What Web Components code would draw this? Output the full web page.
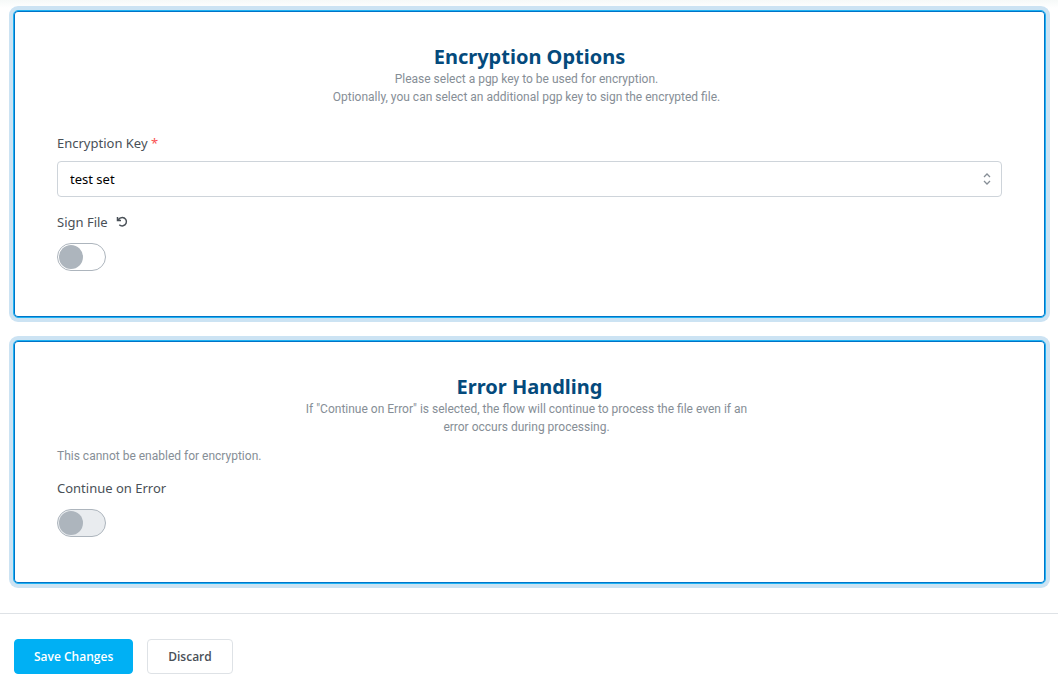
<!DOCTYPE html>
<html lang="en">
<head>
<meta charset="utf-8">
<meta name="viewport" content="width=device-width, initial-scale=1">
<title>Encryption Options</title>
<style>
    :root {
        --heading: #044a7c;
        --text: #495057;
        --muted: #868e96;
        --control-border: #ced4da;
        --primary: #00b0f4;
        --small-font: "Segoe UI", Roboto, sans-serif;
        --button-font: "Segoe UI", "Open Sans", sans-serif;
    }
    body {
        margin: 0;
        background: #fff linear-gradient(#f6f9f8, #fff) no-repeat top / 100% 8px;
        color: var(--text);
        font-family: "Segoe UI", "Noto Sans", sans-serif;
        font-size: 13px;
        line-height: 22px;
    }
</style>
</head>
<body>
<flow-settings></flow-settings>

<template id="flow-settings-template">
    <style>
        :host { display: block; }
        main {
            display: flex;
            flex-direction: column;
            gap: 22px;
            padding: 10px 12px 29px 13px;
        }
        footer {
            display: flex;
            gap: 14px;
            padding: 25px 14px 11px;
            border-top: 1px solid #dee2e6;
        }
    </style>
    <main>
        <option-card heading="Encryption Options">
            <span slot="description">Please select a pgp key to be used for encryption.<br>Optionally, you can select an additional pgp key to sign the encrypted file.</span>
            <select-field label="Encryption Key" value="test set" required></select-field>
            <switch-field label="Sign File" resettable></switch-field>
        </option-card>
        <option-card heading="Error Handling">
            <span slot="description">If "Continue on Error" is selected, the flow will continue to process the file even if an error occurs during processing.</span>
            <switch-field label="Continue on Error" hint="This cannot be enabled for encryption." disabled></switch-field>
        </option-card>
    </main>
    <footer>
        <action-button primary>Save Changes</action-button>
        <action-button>Discard</action-button>
    </footer>
</template>

<template id="option-card-template">
    <style>
        :host {
            display: block;
            padding: 33px 43px 46px;
            border: 1px solid #1fb2f2;
            border-radius: 5px;
            background: #fff;
            box-shadow: inset 0 0 0 1px #0074c8, 0 0 0 4px #cce3f3;
        }
        header {
            display: flex;
            flex-direction: column;
            align-items: center;
            text-align: center;
        }
        h2 {
            margin: 0;
            color: var(--heading);
            font-size: 20px;
            font-weight: 700;
            line-height: 26px;
        }
        p {
            max-width: 450px;
            margin: 0;
            padding-right: 6px;
            color: var(--muted);
            font-family: var(--small-font);
            font-size: 12px;
            line-height: 18px;
        }
    </style>
    <header>
        <h2></h2>
        <p><slot name="description"></slot></p>
    </header>
    <slot></slot>
</template>

<template id="select-field-template">
    <style>
        :host {
            display: block;
            margin-top: 26px;
        }
        .required { color: #fa5252; }
        .control {
            display: grid;
            align-items: center;
            margin-top: 7px;
        }
        select, svg { grid-area: 1 / 1; }
        select {
            appearance: none;
            width: 100%;
            height: 36px;
            padding: 0 32px 0 12px;
            border: 1px solid var(--control-border);
            border-radius: 4px;
            background: #fff;
            color: #000;
            font: inherit;
        }
        svg {
            justify-self: end;
            margin-right: 9px;
            pointer-events: none;
        }
    </style>
    <label for="control"><span class="text"></span> <span class="required" hidden>*</span></label>
    <div class="control">
        <select id="control"></select>
        <svg width="12" height="14" viewBox="0 0 12 14" fill="none" stroke="#868e96" stroke-width="1.3" aria-hidden="true">
            <path d="M3 5 6 2l3 3M3 9l3 3 3-3"/>
        </svg>
    </div>
</template>

<template id="switch-field-template">
    <style>
        :host {
            display: block;
            margin-top: 14px;
        }
        :host([hint]) { margin-top: 11px; }
        .hint {
            margin: 0 0 12px;
            color: var(--muted);
            font-family: var(--small-font);
            font-size: 12px;
            line-height: 18px;
        }
        .caption {
            display: flex;
            align-items: center;
            gap: 8px;
            margin-bottom: 10px;
        }
        button {
            display: flex;
            padding: 0;
            border: 0;
            background: none;
            color: var(--text);
            cursor: pointer;
        }
        [hidden] { display: none; }
        input {
            appearance: none;
            display: flex;
            align-items: center;
            width: 49px;
            height: 28px;
            margin: 0;
            padding: 1px;
            border: 1px solid #adb5bd;
            border-radius: 14px;
            background: #fff;
            box-sizing: border-box;
        }
        input::before {
            content: "";
            width: 24px;
            height: 24px;
            border-radius: 50%;
            background: #adb5bd;
        }
        input:checked {
            justify-content: flex-end;
            background: var(--primary);
        }
        input:disabled { background: #e9ecef; }
    </style>
    <p class="hint" id="hint" hidden></p>
    <div class="caption">
        <label for="control"></label>
        <button type="button" aria-label="Reset" hidden>
            <svg width="12" height="12" viewBox="0 0 12 12" fill="none" stroke="currentColor" stroke-width="1.5" aria-hidden="true">
                <path d="M1.5 1v3.5H5M2 4.2C3 2.6 4.5 1.5 6.300 1.500a4.200 4.200 0 1 1-3 7.200"/>
            </svg>
        </button>
    </div>
    <input type="checkbox" role="switch" id="control">
</template>

<template id="action-button-template">
    <style>
        :host { display: block; }
        button {
            height: 35px;
            padding: 0 20px;
            border: 1px solid #dee2e6;
            border-radius: 4px;
            background: #fff;
            color: var(--text);
            font-family: var(--button-font);
            font-size: 12px;
            font-weight: 600;
            cursor: pointer;
        }
        :host([primary]) button {
            padding: 0 19px;
            border-color: var(--primary);
            background: var(--primary);
            color: #fff;
        }
    </style>
    <button type="button"><slot></slot></button>
</template>

<script>
    class TemplateElement extends HTMLElement {
        constructor() {
            super();
            const template = document.getElementById(`${this.localName}-template`);
            this.attachShadow({ mode: 'open' }).append(template.content.cloneNode(true));
        }

        find(selector) {
            return this.shadowRoot.querySelector(selector);
        }
    }

    class ActionButton extends TemplateElement {}

    class OptionCard extends TemplateElement {
        connectedCallback() {
            this.find('h2').textContent = this.getAttribute('heading');
        }
    }

    class SelectField extends TemplateElement {
        connectedCallback() {
            const select = this.find('select');
            const value = this.getAttribute('value');
            this.find('.text').textContent = this.getAttribute('label');
            this.find('.required').hidden = !this.hasAttribute('required');
            select.required = this.hasAttribute('required');
            select.replaceChildren(new Option(value, value));
        }
    }

    class SwitchField extends TemplateElement {
        connectedCallback() {
            const input = this.find('input');
            const reset = this.find('button');
            this.find('label').textContent = this.getAttribute('label');
            input.disabled = this.hasAttribute('disabled');

            if (this.hasAttribute('hint')) {
                const hint = this.find('.hint');
                hint.textContent = this.getAttribute('hint');
                hint.hidden = false;
                input.setAttribute('aria-describedby', 'hint');
            }

            reset.hidden = !this.hasAttribute('resettable');
            reset.addEventListener('click', () => {
                input.checked = false;
            });
        }
    }

    class FlowSettings extends TemplateElement {}

    customElements.define('action-button', ActionButton);
    customElements.define('option-card', OptionCard);
    customElements.define('select-field', SelectField);
    customElements.define('switch-field', SwitchField);
    customElements.define('flow-settings', FlowSettings);
</script>
</body>
</html>
